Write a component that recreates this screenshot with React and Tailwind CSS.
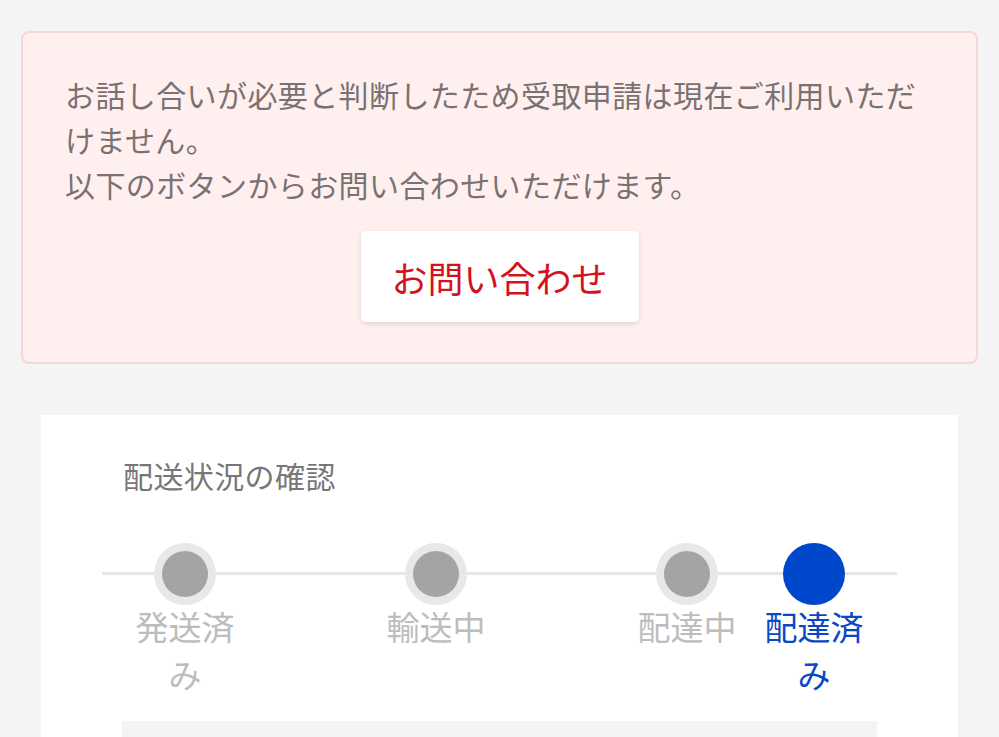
const steps = [
  { label: '発送済み', active: false, ml: 'ml-[31px]' },
  { label: '輸送中', active: false, ml: 'ml-[147px]' },
  { label: '配達中', active: false, ml: 'ml-[147px]' },
  { label: '配達済み', active: true, ml: 'ml-[23px]' },
];

const App = () => {
  return (
    <div className="min-h-[737px] bg-[#f4f4f4] pt-[31px] px-[21px] font-['Noto_Sans_CJK_JP','Noto_Sans',sans-serif]">
      {/* Notice */}
      <div className="rounded-lg border-2 border-[#f8d6d3] bg-[#fff0ef] px-[42px] pt-[39px] pb-[40px]">
        <p className="text-[30px] leading-[45px] text-[#7a7272] tracking-[0.4px]">
          お話し合いが必要と判断したため受取申請は現在ご利用いただけません。
          <br />
          以下のボタンからお問い合わせいただけます。
        </p>
        <div className="mt-[24px] flex justify-center">
          <button className="h-[91px] w-[278px] rounded-[5px] bg-white text-[36px] text-[#d3131c] shadow-[0_2px_5px_rgba(0,0,0,0.12)]">
            お問い合わせ
          </button>
        </div>
      </div>

      {/* Delivery status */}
      <div className="mx-[20px] mt-[51px] bg-white pt-[42px]">
        <h2 className="pl-[82px] text-[30px] leading-[36px] tracking-[0.4px] text-[#777]">配送状況の確認</h2>
        <div className="relative mx-[61px] mt-[50px]">
          <div className="absolute left-0 right-0 top-[29px] h-[3px] bg-[#e6e6e6]" />
          <div className="relative flex items-start">
            {steps.map((s) => (
              <div key={s.label} className={`${s.ml} flex w-[104px] flex-col items-center`}>
                {s.active ? (
                  <div className="h-[62px] w-[62px] rounded-full bg-[#0047cc]" />
                ) : (
                  <div className="flex h-[62px] w-[62px] items-center justify-center rounded-full bg-[#e8e8e8]">
                    <div className="h-[46px] w-[46px] rounded-full bg-[#a4a4a4]" />
                  </div>
                )}
                <div
                  className={`-mt-[3px] w-[104px] text-center text-[33px] leading-[48px] ${
                    s.active ? 'text-[#0a47c4]' : 'text-[#bdbdbd]'
                  }`}
                >
                  {s.label}
                </div>
              </div>
            ))}
          </div>
        </div>
        <div className="mx-[81px] mt-[23px] h-[40px] bg-[#f4f4f4]" />
      </div>
    </div>
  );
};

export default App;
